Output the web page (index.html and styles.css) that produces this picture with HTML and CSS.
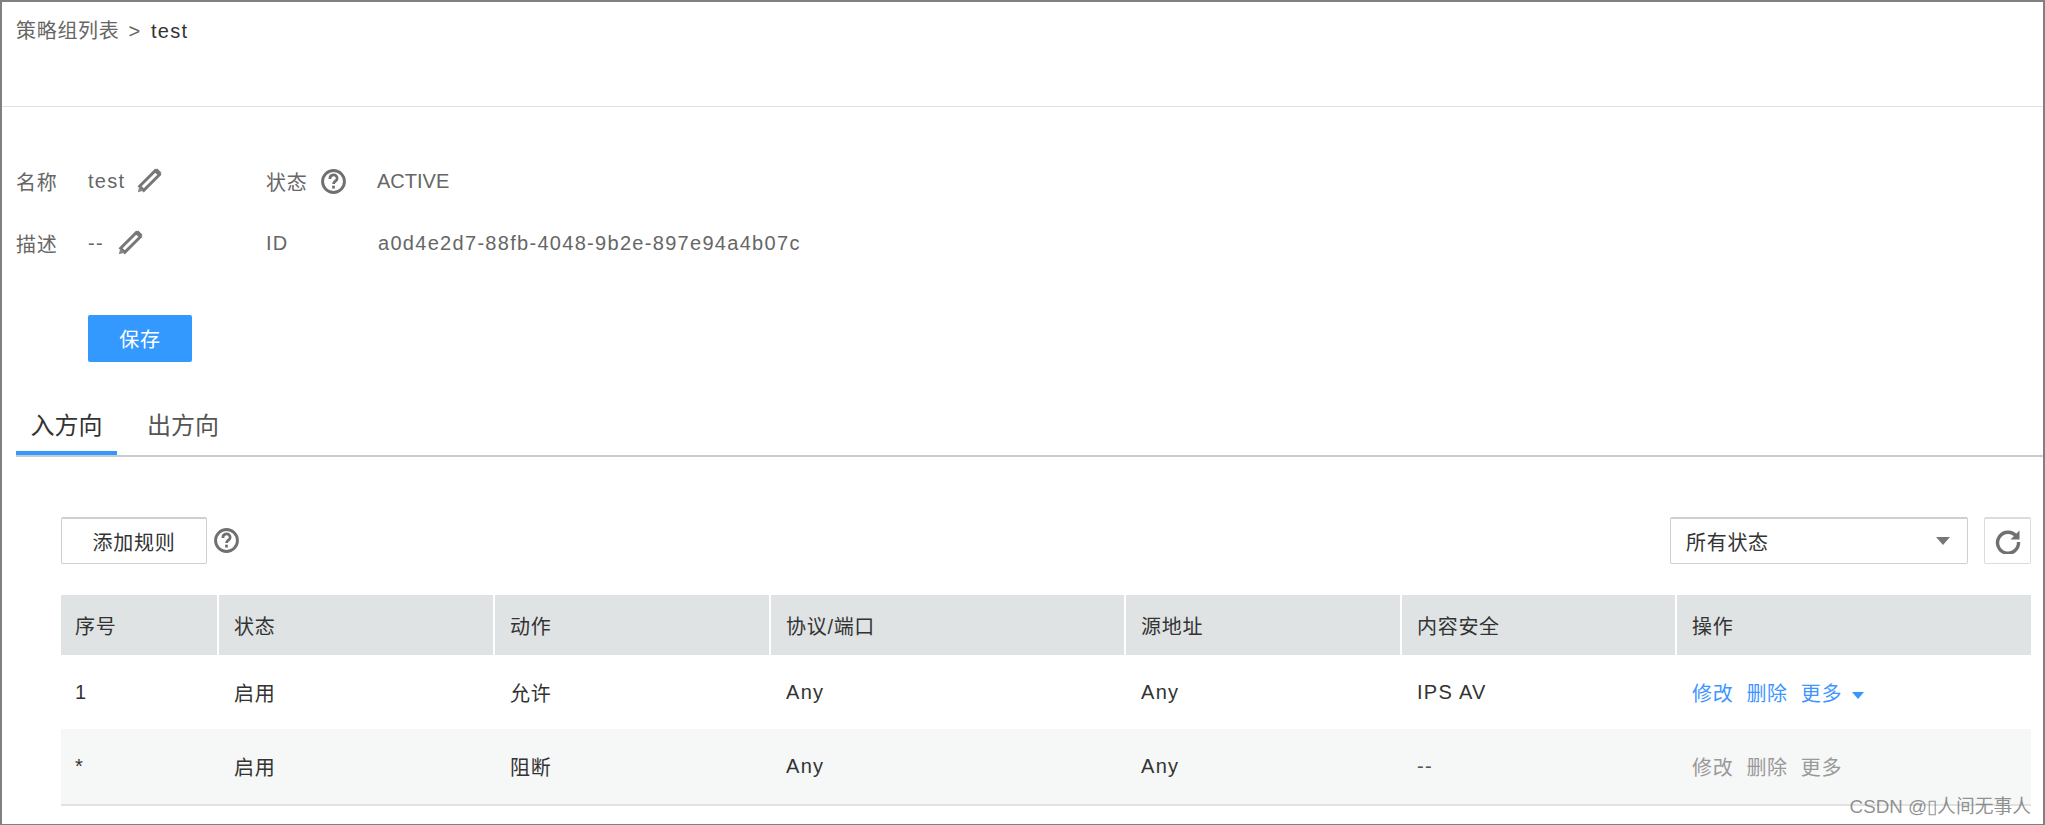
FILE: index.html
```html
<!DOCTYPE html>
<html lang="zh-CN">
<head>
<meta charset="utf-8">
<title>策略组详情</title>
<link rel="stylesheet" href="styles.css">
</head>
<body>
<div class="frame">
  <header class="crumbs"><span class="crumb-link">策略组列表</span><span class="crumb-sep">&gt;</span><span class="crumb-current lat">test</span></header>

  <section class="info">
    <div class="label">名称</div>
    <div class="value lat">test
      <svg class="pencil" viewBox="0 0 24 24"><path d="M2.500 17.500l4 4 15-15-4-4z" fill="none" stroke="#777" stroke-width="2.800"/><path d="M.8 23.200l1.400-5.400 4 4z" fill="#888"/><path d="M17.500 2l2-1.500 4 4L22 6.500z" fill="#777"/></svg>
    </div>
    <div class="label label-help">状态
      <svg class="help" viewBox="0 0 24 24"><circle cx="12" cy="12" r="10.500" fill="none" stroke="#707070" stroke-width="2.800"/><path d="M8.500 9.500c0-5 7-5 7-.5 0 2.500-3.500 2.800-3.500 5.500" fill="none" stroke="#707070" stroke-width="2.600"/><rect x="10.700" y="16" width="2.600" height="2.800" fill="#707070"/></svg>
    </div>
    <div class="value-plain status-text">ACTIVE</div>

    <div class="label">描述</div>
    <div class="value lat">--
      <svg class="pencil pencil-desc" viewBox="0 0 24 24"><path d="M2.500 17.500l4 4 15-15-4-4z" fill="none" stroke="#777" stroke-width="2.800"/><path d="M.8 23.200l1.400-5.400 4 4z" fill="#888"/><path d="M17.500 2l2-1.500 4 4L22 6.500z" fill="#777"/></svg>
    </div>
    <div class="label lat">ID</div>
    <div class="value-plain lat">a0d4e2d7-88fb-4048-9b2e-897e94a4b07c</div>
  </section>

  <button class="btn-save" type="button">保存</button>

  <nav class="tabs">
    <span class="tab tab-active">入方向</span>
    <span class="tab">出方向</span>
  </nav>

  <div class="toolbar">
    <button class="btn-add" type="button">添加规则</button>
    <svg class="help help-add" viewBox="0 0 24 24"><circle cx="12" cy="12" r="10.500" fill="none" stroke="#707070" stroke-width="2.800"/><path d="M8.500 9.500c0-5 7-5 7-.5 0 2.500-3.500 2.800-3.500 5.500" fill="none" stroke="#707070" stroke-width="2.600"/><rect x="10.700" y="16" width="2.600" height="2.800" fill="#707070"/></svg>
    <div class="select"><span>所有状态</span><i class="caret"></i></div>
    <button class="btn-refresh" type="button" aria-label="刷新">
      <svg viewBox="0 0 26 26"><path d="M21.500 8.500A10.500 10.500 0 1 0 23.500 14" fill="none" stroke="#707070" stroke-width="3.400"/><path d="M24.500 2.500v9h-9z" fill="#707070"/></svg>
    </button>
  </div>

  <table class="rules">
    <thead>
      <tr><th class="c1">序号</th><th class="c2">状态</th><th class="c3">动作</th><th class="c4">协议/端口</th><th class="c5">源地址</th><th class="c6">内容安全</th><th class="c7">操作</th></tr>
    </thead>
    <tbody>
      <tr>
        <td>1</td><td>启用</td><td>允许</td><td class="lat">Any</td><td class="lat">Any</td><td class="lat">IPS AV</td>
        <td class="ops"><a>修改</a><a>删除</a><a>更多</a><i class="caret caret-blue"></i></td>
      </tr>
      <tr class="alt">
        <td>*</td><td>启用</td><td>阻断</td><td class="lat">Any</td><td class="lat">Any</td><td class="muted lat">--</td>
        <td class="ops ops-off"><a>修改</a><a>删除</a><a>更多</a></td>
      </tr>
    </tbody>
  </table>

  <div class="watermark">CSDN @▯人间无事人</div>
</div>
</body>
</html>
```

FILE: styles.css
```css
* { box-sizing: border-box; }
html, body { margin: 0; padding: 0; background: #fff; }
body {
  font-family: "Liberation Sans", "Noto Sans CJK SC", sans-serif;
  font-size: 20px;
  letter-spacing: 0.7px;
  color: #666;
}
.lat { letter-spacing: 1.3px; }
.status-text { letter-spacing: 0; margin-left: -1px; }
.frame {
  position: relative;
  width: 2045px;
  height: 825px;
  overflow: hidden;
  border: 2px solid #808080;
  border-bottom-width: 1px;
}
.crumbs {
  height: 105px;
  padding: 14px 0 0 14px;
  line-height: 30px;
  border-bottom: 1px solid #e2e2e2;
}
.crumb-sep { margin: 0 10px 0 9px; }
.crumb-current { color: #333; }

.info {
  display: grid;
  grid-template-columns: 72px 178px 112px 1fr;
  grid-auto-rows: 62px;
  align-items: center;
  padding: 43px 0 0 14px;
}
.value { display: flex; align-items: center; }
.label-help { display: flex; align-items: center; }
.pencil { width: 25px; height: 25px; margin: -2px 0 0 12px; }
.pencil-desc { margin-left: 14px; }
.help { width: 25px; height: 25px; margin-left: 14px; }
.help-add { margin-left: 7px; }

.btn-save {
  display: block;
  width: 104px;
  height: 47px;
  margin: 41px 0 0 86px;
  border: 0;
  border-radius: 2px;
  background: #3399ff;
  color: #fff;
  font: inherit;
  letter-spacing: inherit;
}

.tabs {
  display: flex;
  height: 61px;
  margin: 34px 0 0 14px;
  border-bottom: 2px solid #cbcbcb;
}
.tab {
  width: 101px;
  height: 59px;
  padding-top: 15px;
  text-align: center;
  font-size: 24px;
  letter-spacing: 0;
  line-height: 30px;
  color: #555;
}
.tab + .tab { width: 130px; text-align: center; margin-left: 1px; }
.tab-active {
  color: #333;
  border-bottom: 4px solid #3399ff;
}

.toolbar {
  display: flex;
  align-items: center;
  height: 47px;
  margin: 60px 12px 0 59px;
}
.btn-add {
  width: 146px;
  height: 47px;
  border: 1px solid #cfcfcf;
  border-top: 2px solid #cfcfcf;
  border-radius: 2px;
  background: #fff;
  color: #333;
  font: inherit;
  letter-spacing: inherit;
}
.select {
  display: flex;
  align-items: center;
  justify-content: space-between;
  width: 298px;
  height: 47px;
  margin-left: auto;
  padding: 0 17px 0 15px;
  border: 1px solid #cfcfcf;
  border-top: 2px solid #cfcfcf;
  border-radius: 2px;
  color: #333;
}
.caret {
  display: block;
  width: 0;
  height: 0;
  border-left: 7px solid transparent;
  border-right: 7px solid transparent;
  border-top: 8px solid #777;
}
.btn-refresh {
  display: flex;
  align-items: center;
  justify-content: center;
  width: 47px;
  height: 47px;
  margin-left: 16px;
  padding: 0;
  border: 1px solid #dcdcdc;
  border-top: 2px solid #dcdcdc;
  border-radius: 2px;
  background: #fff;
}
.btn-refresh svg { width: 26px; height: 26px; }

.rules {
  width: 1970px;
  margin: 31px 0 0 59px;
  table-layout: fixed;
  border-collapse: separate;
  border-spacing: 0;
  color: #333;
}
.rules th {
  height: 60px;
  padding: 0 0 0 15px;
  text-align: left;
  font-weight: 400;
  background: #e0e3e4;
  border-right: 2px solid #fff;
}
.rules th:last-child { border-right: 0; }
.c1 { width: 158px; }
.c2 { width: 276px; }
.c3 { width: 276px; }
.c4 { width: 355px; }
.c5 { width: 276px; }
.c6 { width: 275px; }
.c7 { width: 354px; }
.rules th.c1 { padding-left: 14px; }
.rules td { height: 74px; padding: 0 0 0 15px; }
.rules td:first-child { padding-left: 14px; }
.rules .alt td {
  height: 77px;
  background: #f6f7f7;
  border-bottom: 2px solid #e0e2e2;
}
.muted { color: #555; }
.ops { white-space: nowrap; }
.ops a { color: #3f95ff; margin-right: 13px; }
.ops-off a { color: #999; }
.caret-blue {
  display: inline-block;
  vertical-align: middle;
  border-left-width: 6px;
  border-right-width: 6px;
  border-top: 7px solid #3399ff;
  margin-left: -3px;
}
.watermark {
  position: absolute;
  right: 12px;
  top: 792px;
  font-size: 18.800px;
  letter-spacing: 0;
  line-height: 26px;
  color: rgba(110, 110, 110, 0.75);
  white-space: nowrap;
}
```
